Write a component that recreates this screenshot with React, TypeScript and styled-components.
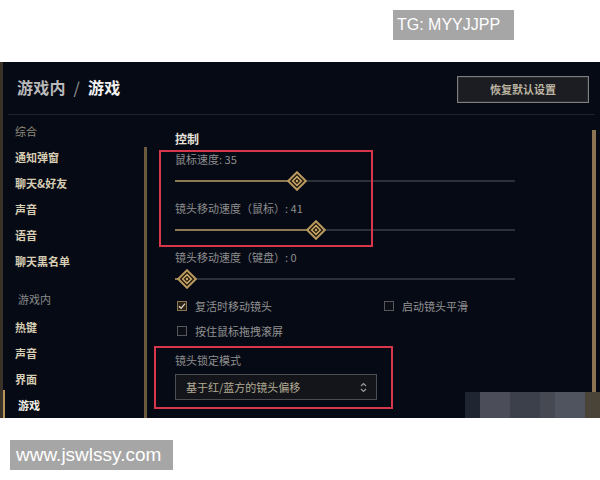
import React from "react";
import styled, { createGlobalStyle } from "styled-components";

const GlobalStyle = createGlobalStyle`
  html, body { margin: 0; padding: 0; background: #ffffff; }
  body {
    width: 600px;
    height: 480px;
    overflow: hidden;
    font-family: "Noto Sans CJK SC", "Noto Sans", sans-serif;
  }
`;

const Page = styled.div`
  width: 600px;
  height: 480px;
  display: flex;
  flex-direction: column;
`;

const TopBar = styled.div`
  height: 62px;
  display: flex;
  justify-content: flex-end;
  align-items: flex-start;
  padding: 10px 86px 0 0;
  box-sizing: border-box;
`;

const Badge = styled.div<{ $w: number; $pl: number; $fs: number }>`
  width: ${(p) => p.$w}px;
  height: 30px;
  box-sizing: border-box;
  padding-left: ${(p) => p.$pl}px;
  background: #a6a6a6;
  color: #ffffff;
  font-family: "Liberation Sans", Arial, sans-serif;
  font-size: ${(p) => p.$fs}px;
  line-height: 30px;
  white-space: nowrap;
`;

const BottomBar = styled.div`
  padding: 22px 0 0 10px;
`;

const Panel = styled.div`
  position: relative;
  width: 600px;
  height: 356px;
  box-sizing: border-box;
  background: #060a15;
  border-left: 3px solid #3a3226;
  overflow: hidden;
  display: flex;
  flex-direction: column;
`;

const Header = styled.div`
  height: 56px;
  margin: 0 5px;
  padding: 0 6px 0 9px;
  box-sizing: border-box;
  border-bottom: 1px solid #1c2330;
  display: flex;
  align-items: center;
  justify-content: space-between;
`;

const Title = styled.div`
  font-size: 16px;
  font-weight: 700;
  color: #b9b9b9;
  white-space: nowrap;
  letter-spacing: 0.2px;
  margin-top: -3px;
`;

const Slash = styled.span`
  color: #9a9a9a;
  margin: 0 8px;
  font-weight: 400;
`;

const Current = styled.span`
  color: #f2f2f2;
`;

const ResetButton = styled.div`
  width: 132px;
  height: 27px;
  box-sizing: border-box;
  border: 1px solid #7f7f7f;
  box-shadow: inset 0 0 0 1px #2a2c30;
  background: #1b1d22;
  color: #bdb5a2;
  font-size: 11px;
  font-weight: 700;
  display: flex;
  align-items: center;
  justify-content: center;
  margin-top: 2px;
`;

const Body = styled.div`
  flex: 1;
  display: flex;
`;

const Sidebar = styled.div`
  width: 141px;
  padding: 3px 0 0 12px;
  box-sizing: border-box;
  display: flex;
  flex-direction: column;
`;

type NavKind = "group" | "item" | "section" | "active";

const NavItem = styled.div<{ $kind: NavKind }>`
  position: relative;
  height: 26px;
  line-height: 26px;
  white-space: nowrap;
  font-size: 11px;
  font-weight: ${(p) => (p.$kind === "item" || p.$kind === "active" ? 700 : 400)};
  color: ${(p) =>
    p.$kind === "active"
      ? "#f4f0e8"
      : p.$kind === "item"
      ? "#d6cdb2"
      : p.$kind === "group"
      ? "#8f897b"
      : "#8a8a8a"};
  padding-left: ${(p) => (p.$kind === "section" || p.$kind === "active" ? 3 : 0)}px;
  margin-top: ${(p) => (p.$kind === "section" ? 12 : 0)}px;
  &::before {
    content: "";
    display: ${(p) => (p.$kind === "active" ? "block" : "none")};
    position: absolute;
    left: -15px;
    top: -2px;
    bottom: -20px;
    width: 5px;
    background: #b8955a;
  }
`;

const FirstUnder = styled.div`
  margin-top: 2px;
`;

const SideScroll = styled.div`
  width: 3px;
  margin-top: 32px;
  background: #6c5a3f;
`;

const Content = styled.div`
  position: relative;
  flex: 1;
  padding: 17px 0 0 28px;
  box-sizing: border-box;
  display: flex;
  flex-direction: column;
`;

const RightScroll = styled.div`
  width: 4px;
  margin: 15px 4px 0 0;
  background: #8a7454;
`;

const SectionTitle = styled.div`
  font-size: 12px;
  font-weight: 700;
  color: #e6e2da;
  line-height: 14px;
  height: 14px;
  margin-bottom: 5px;
`;

const FieldLabel = styled.div`
  font-size: 11px;
  line-height: 16px;
  height: 16px;
  color: #8e8e8e;
  white-space: nowrap;
`;

const SliderRow = styled.div`
  position: relative;
  width: 340px;
  height: 22px;
  margin: 3px 0 8px;
  display: flex;
  align-items: center;
`;

const TrackFill = styled.div`
  height: 2px;
  background: #8c7a55;
`;

const TrackRest = styled.div`
  flex: 1;
  height: 2px;
  background: #2b303a;
`;

const Thumb = styled.div`
  position: absolute;
  top: 50%;
  width: 20px;
  height: 20px;
  transform: translate(-50%, -50%);
  display: flex;
`;

const CheckGrid = styled.div`
  display: grid;
  grid-template-columns: 207px auto;
  row-gap: 11px;
  margin-top: 1px;
`;

const CheckItem = styled.div`
  display: flex;
  align-items: center;
  height: 14px;
  gap: 8px;
  padding-left: 2px;
  font-size: 11px;
  color: #929292;
  white-space: nowrap;
`;

const Box = styled.div<{ $on: boolean }>`
  width: 10px;
  height: 10px;
  box-sizing: border-box;
  border: 1px solid ${(p) => (p.$on ? "#8b7552" : "#55575c")};
  background: ${(p) => (p.$on ? "#2a2216" : "#0b0e15")};
  display: flex;
  align-items: center;
  justify-content: center;
`;

const LockLabel = styled(FieldLabel)`
  margin-top: 14px;
`;

const Select = styled.div`
  margin-top: 6px;
  width: 202px;
  height: 26px;
  box-sizing: border-box;
  border: 1px solid #4b4d52;
  background: #13151b;
  padding: 0 9px 0 10px;
  display: flex;
  align-items: center;
  justify-content: space-between;
  font-size: 11px;
  color: #b3ab93;
`;

const Highlight = styled.div<{ $l: number; $t: number; $w: number; $h: number }>`
  position: absolute;
  left: ${(p) => p.$l}px;
  top: ${(p) => p.$t}px;
  width: ${(p) => p.$w}px;
  height: ${(p) => p.$h}px;
  box-sizing: border-box;
  border: 2px solid #d8364a;
  pointer-events: none;
`;

const Mosaic = styled.div`
  position: absolute;
  right: 0;
  bottom: 0;
  height: 26px;
  display: flex;
`;

const Tile = styled.div<{ $w: number; $c: string }>`
  width: ${(p) => p.$w}px;
  background: ${(p) => p.$c};
`;

const DiamondThumb = () => (
  <svg width="20" height="20" viewBox="0 0 20 20">
    <path d="M10 1.2 L18.8 10 L10 18.8 L1.2 10 Z" fill="#1c150c" stroke="#b8995e" strokeWidth="2" />
    <path d="M10 5.6 L14.4 10 L10 14.4 L5.6 10 Z" fill="#2a1f10" stroke="#c9a96a" strokeWidth="1.5" />
    <circle cx="10" cy="10" r="1.2" fill="#c9a96a" />
  </svg>
);

const Slider = ({ value }: { value: number }) => {
  const center = 12 + value * 3.14;
  return (
    <SliderRow>
      <TrackFill style={{ width: center }} />
      <TrackRest />
      <Thumb style={{ left: center }}>
        <DiamondThumb />
      </Thumb>
    </SliderRow>
  );
};

const Check = ({ on, label }: { on: boolean; label: string }) => (
  <CheckItem>
    <Box $on={on}>
      {on && (
        <svg width="8" height="8" viewBox="0 0 8 8">
          <path d="M1 4.2 L3.1 6.3 L7 1.6" fill="none" stroke="#e2d8c2" strokeWidth="1.3" />
        </svg>
      )}
    </Box>
    {label}
  </CheckItem>
);

const UpDown = () => (
  <svg width="7" height="11" viewBox="0 0 7 11">
    <path d="M1 4 L3.5 1.5 L6 4" fill="none" stroke="#9a9a9a" strokeWidth="1.2" />
    <path d="M1 7 L3.5 9.5 L6 7" fill="none" stroke="#9a9a9a" strokeWidth="1.2" />
  </svg>
);

export default function App() {
  return (
    <Page>
      <GlobalStyle />
      <TopBar>
        <Badge $w={121} $pl={4} $fs={16}>TG: MYYJJPP</Badge>
      </TopBar>
      <Panel>
        <Header>
          <Title>
            游戏内<Slash>/</Slash>
            <Current>游戏</Current>
          </Title>
          <ResetButton>恢复默认设置</ResetButton>
        </Header>
        <Body>
          <Sidebar>
            <NavItem $kind="group">综合</NavItem>
            <NavItem $kind="item">通知弹窗</NavItem>
            <NavItem $kind="item">聊天&amp;好友</NavItem>
            <NavItem $kind="item">声音</NavItem>
            <NavItem $kind="item">语音</NavItem>
            <NavItem $kind="item">聊天黑名单</NavItem>
            <NavItem $kind="section">游戏内</NavItem>
            <FirstUnder>
              <NavItem $kind="item">热键</NavItem>
            </FirstUnder>
            <NavItem $kind="item">声音</NavItem>
            <NavItem $kind="item">界面</NavItem>
            <NavItem $kind="active">游戏</NavItem>
          </Sidebar>
          <SideScroll />
          <Content>
            <SectionTitle>控制</SectionTitle>
            <FieldLabel>鼠标速度: 35</FieldLabel>
            <Slider value={35} />
            <FieldLabel>镜头移动速度（鼠标）: 41</FieldLabel>
            <Slider value={41} />
            <FieldLabel>镜头移动速度（键盘）: 0</FieldLabel>
            <Slider value={0} />
            <CheckGrid>
              <Check on label="复活时移动镜头" />
              <Check on={false} label="启动镜头平滑" />
              <Check on={false} label="按住鼠标拖拽滚屏" />
            </CheckGrid>
            <LockLabel>镜头锁定模式</LockLabel>
            <Select>
              <span>基于红/蓝方的镜头偏移</span>
              <UpDown />
            </Select>
            <Highlight $l={12} $t={35} $w={214} $h={97} />
            <Highlight $l={7} $t={231} $w={239} $h={63} />
          </Content>
          <RightScroll />
        </Body>
        <Mosaic>
          <Tile $w={15} $c="#1f2531" />
          <Tile $w={30} $c="#4b4e58" />
          <Tile $w={30} $c="#3c404a" />
          <Tile $w={15} $c="#464951" />
          <Tile $w={30} $c="#50545e" />
          <Tile $w={15} $c="#4a4438" />
        </Mosaic>
      </Panel>
      <BottomBar>
        <Badge $w={163} $pl={6} $fs={19}>www.jswlssy.com</Badge>
      </BottomBar>
    </Page>
  );
}
